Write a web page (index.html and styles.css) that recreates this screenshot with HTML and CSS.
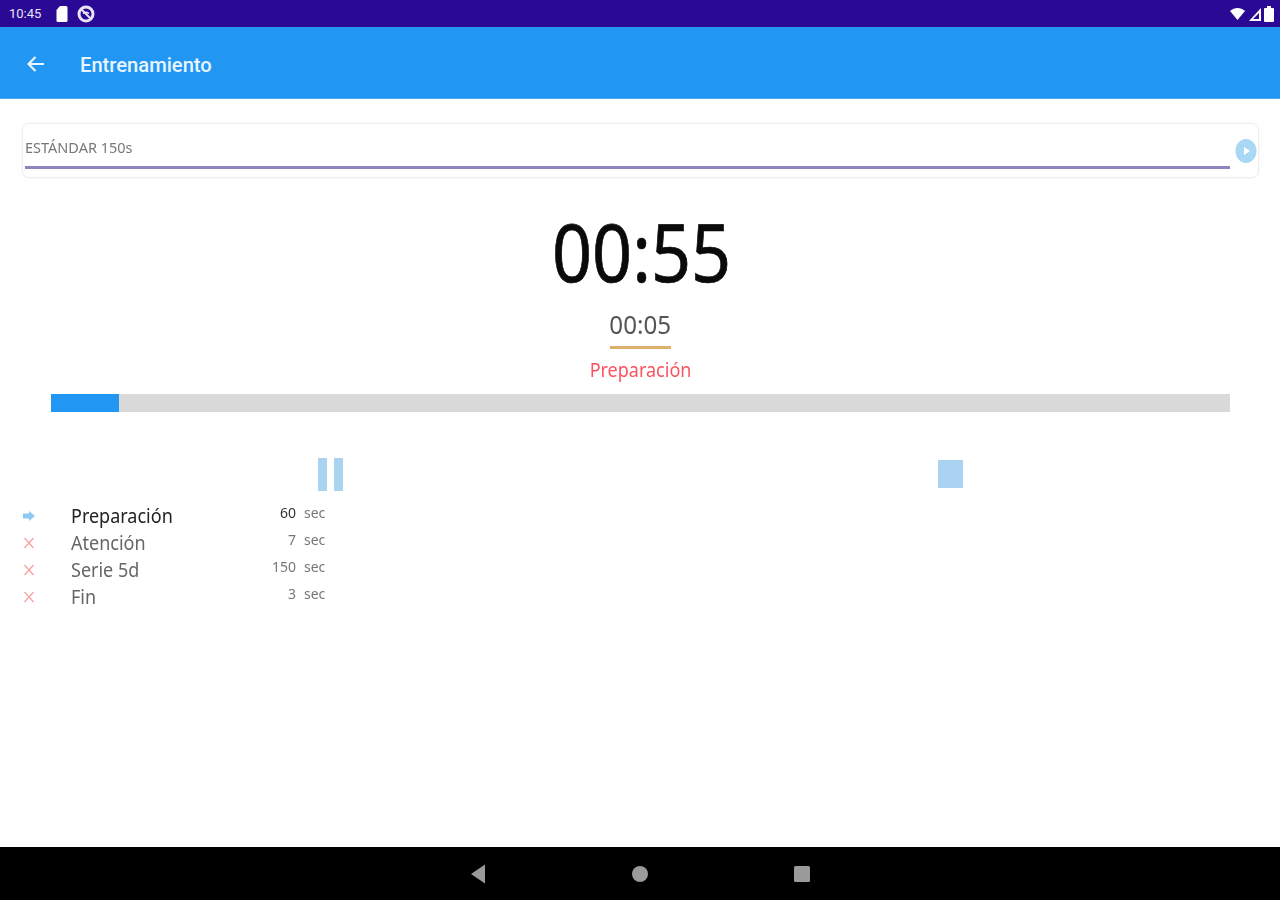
FILE: index.html
```html
<!DOCTYPE html>
<html lang="es">
  <head>
    <meta charset="UTF-8" />
    <meta name="viewport" content="width=device-width, initial-scale=1.0" />
    <title>Entrenamiento</title>
    <link rel="stylesheet" href="styles.css">
  </head>
  <body>
    <div class="status-bar">
      <div class="status-left">
        <span class="clock">10:45</span>
        <svg class="status-icon" width="12" height="18" viewBox="0 0 12 18"><path d="M4 1h6a1.500 1.500 0 0 1 1.500 1.500v13a1.500 1.500 0 0 1-1.500 1.500H2a1.500 1.500 0 0 1-1.500-1.500V5z" fill="#fff"/></svg>
        <svg class="status-icon status-dnd" width="18" height="18" viewBox="0 0 18 18"><circle cx="9" cy="9" r="7" fill="none" stroke="#e8e4f6" stroke-width="3"/><path d="M4 4l10 10" stroke="#e8e4f6" stroke-width="2"/><path d="M6 8.500c2-1.500 4-1.500 6 0" stroke="#e8e4f6" stroke-width="1.500" fill="none"/></svg>
      </div>
      <div class="status-right">
        <svg width="16" height="12" viewBox="0 0 16 12"><path d="M0 3c4.500-4 10.500-4 15 0L7.500 12z" fill="#fff"/></svg>
        <svg width="12" height="14" viewBox="0 0 12 14"><path d="M0 14L12 1v13zM4 12h6V6z" fill="#fff" fill-rule="evenodd"/></svg>
        <svg width="10" height="16" viewBox="0 0 10 16"><path d="M3 0h4v2h2a1 1 0 0 1 1 1v12a1 1 0 0 1-1 1H1a1 1 0 0 1-1-1V3a1 1 0 0 1 1-1h2z" fill="#fff"/></svg>
      </div>
    </div>

    <header class="app-bar">
      <svg class="back" width="20" height="18" viewBox="0 0 20 18"><path d="M18 9H3M9.500 2L2.500 9l7 7" fill="none" stroke="#e9f5fe" stroke-width="2.200"/></svg>
      <h1>Entrenamiento</h1>
    </header>

    <main class="content">
      <div class="routine-card">
        <div class="routine-info">
          <div class="routine-name">ESTÁNDAR 150s</div>
          <div class="routine-line"></div>
        </div>
        <svg class="routine-next" width="22" height="24" viewBox="0 0 22 24"><ellipse cx="11" cy="12" rx="10.500" ry="12" fill="#a9d8f5"/><path d="M9 8l6 4-6 4z" fill="#fff"/></svg>
      </div>

      <div class="timer">
        <div class="timer-main"><span>00:55</span></div>
        <div class="timer-sub"><span>00:05</span></div>
        <div class="timer-line"></div>
        <div class="timer-phase"><span>Preparación</span></div>
      </div>

      <div class="progress">
        <div class="progress-fill" style="width: 5.8%"></div>
      </div>

      <div class="controls">
        <div class="control"><div class="pause"><i></i><i></i></div></div>
        <div class="control"><div class="stop"></div></div>
      </div>

      <ul class="steps">
        <li class="step step-active">
          <svg class="step-icon" width="14" height="12" viewBox="0 0 14 12"><path d="M1 3.500h6V1l6 5-6 5V8.500H1z" fill="#8fc8f3"/></svg>
          <span class="step-name">Preparación</span>
          <span class="step-value">60</span><span class="step-unit">sec</span>
        </li>
        <li class="step">
          <svg class="step-icon" width="14" height="12" viewBox="0 0 14 12"><path d="M2.500 1l9 10M11.500 1l-9 10" stroke="#f7a3a3" stroke-width="1.300"/></svg>
          <span class="step-name">Atención</span>
          <span class="step-value">7</span><span class="step-unit">sec</span>
        </li>
        <li class="step">
          <svg class="step-icon" width="14" height="12" viewBox="0 0 14 12"><path d="M2.500 1l9 10M11.500 1l-9 10" stroke="#f7a3a3" stroke-width="1.300"/></svg>
          <span class="step-name">Serie 5d</span>
          <span class="step-value">150</span><span class="step-unit">sec</span>
        </li>
        <li class="step">
          <svg class="step-icon" width="14" height="12" viewBox="0 0 14 12"><path d="M2.500 1l9 10M11.500 1l-9 10" stroke="#f7a3a3" stroke-width="1.300"/></svg>
          <span class="step-name">Fin</span>
          <span class="step-value">3</span><span class="step-unit">sec</span>
        </li>
      </ul>
    </main>

    <nav class="nav-bar">
      <svg width="16" height="20" viewBox="0 0 16 20"><path d="M15 0.500v19L1 10z" fill="#9a9a9a"/></svg>
      <svg width="16" height="16" viewBox="0 0 16 16"><circle cx="8" cy="8" r="8" fill="#9a9a9a"/></svg>
      <svg width="16" height="16" viewBox="0 0 16 16"><rect width="16" height="16" rx="1.500" fill="#9a9a9a"/></svg>
    </nav>
  </body>
</html>
```

FILE: styles.css
```css
body {
  font-family: "Noto Sans", "Open Sans", sans-serif;
  display: flex;
  flex-direction: column;
  height: 900px;
  margin: 0;
  background-color: #fff;
  overflow: hidden;
  filter: blur(0.6px);
}
.status-bar {
  display: flex;
  justify-content: space-between;
  align-items: center;
  height: 27px;
  flex-shrink: 0;
  padding: 0 6px 0 9px;
  box-sizing: border-box;
  background-color: #2a0a94;
}
.status-left {
  display: flex;
  align-items: center;
  gap: 12px;
}
.status-left .clock {
  font-family: Roboto, sans-serif;
  font-size: 13px;
  width: 35px;
  color: #e8e4f6;
}
.status-left .status-dnd {
  margin-left: -3px;
}
.status-right {
  display: flex;
  align-items: center;
  gap: 3px;
}
.app-bar {
  display: flex;
  align-items: center;
  height: 72px;
  flex-shrink: 0;
  box-sizing: border-box;
  padding-left: 26px;
  background-color: #2196f3;
  border-bottom: 1px solid #4aa9f5;
}
.app-bar .back {
  margin-top: 2px;
}
.app-bar h1 {
  margin: 4px 0 0 34px;
  font-family: Roboto, sans-serif;
  font-size: 21px;
  font-weight: 500;
  color: #e9f5fe;
  transform: scaleX(0.96);
  transform-origin: left center;
}
.content {
  flex: 1;
  padding: 24px 21px 0 22px;
}
.routine-card {
  display: flex;
  align-items: center;
  height: 55px;
  box-sizing: border-box;
  padding-left: 2px;
  border: 1px solid #eeeeee;
  border-radius: 7px;
  box-shadow: 0 0 2px rgba(0, 0, 0, 0.08);
}
.routine-info {
  flex: 1;
  margin-top: 6px;
}
.routine-name {
  font-size: 14.5px;
  line-height: 18px;
  color: #777;
}
.routine-line {
  height: 3px;
  margin-top: 10px;
  background-color: #8e85bf;
}
.routine-next {
  margin: 0 1px 0 5px;
}
.timer {
  display: flex;
  flex-direction: column;
  align-items: center;
  margin-top: 25px;
}
.timer-main {
  font-size: 81px;
  line-height: 96px;
  color: #0a0a0a;
  -webkit-text-stroke: 0.7px #0a0a0a;
}
.timer-main span,
.timer-sub span,
.timer-phase span {
  display: inline-block;
  transform: scaleX(0.865);
}
.timer-main span {
  margin-left: 2px;
}
.timer-sub span {
  transform: scaleX(0.93);
}
.timer-phase span {
  transform: scaleX(0.9);
}
.timer-sub {
  margin-top: 8px;
  font-size: 26px;
  line-height: 34px;
  color: #555;
}
.timer-line {
  width: 61px;
  height: 3px;
  margin-top: 5px;
  background-color: #dcb06c;
}
.timer-phase {
  margin-top: 7px;
  font-size: 20px;
  line-height: 27px;
  color: #f9545f;
}
.progress {
  height: 18px;
  margin: 11px 29px 0 29px;
  background-color: #d9d9d9;
}
.progress-fill {
  height: 100%;
  background-color: #2196f3;
}
.controls {
  display: grid;
  grid-template-columns: 1fr 1fr;
  margin-top: 46px;
}
.control {
  display: flex;
  justify-content: center;
  height: 33px;
}
.pause {
  display: flex;
  gap: 7px;
  margin-right: 2px;
}
.pause i {
  width: 9px;
  height: 33px;
  background-color: #a9d3f1;
}
.stop {
  width: 25px;
  height: 28px;
  margin: 2px 0 0 2px;
  background-color: #a9d3f1;
}
.steps {
  list-style: none;
  width: 304px;
  margin: 11px 0 0 0;
  padding: 0;
}
.step {
  display: flex;
  align-items: center;
  height: 27px;
  color: #666;
}
.step-icon {
  width: 14px;
  flex-shrink: 0;
}
.step-name {
  flex: 1;
  margin-left: 35px;
  font-size: 20px;
  display: inline-block;
  transform: scaleX(0.9);
  transform-origin: left center;
}
.step-value,
.step-unit {
  font-size: 14px;
  position: relative;
  top: -3px;
  color: #777;
}
.step-unit {
  width: 22px;
  margin-left: 8px;
}
.step-active .step-name {
  color: #222;
}
.step-active .step-value {
  color: #333;
}
.nav-bar {
  display: flex;
  justify-content: center;
  align-items: center;
  gap: 146px;
  height: 53px;
  flex-shrink: 0;
  background-color: #000;
}
```
